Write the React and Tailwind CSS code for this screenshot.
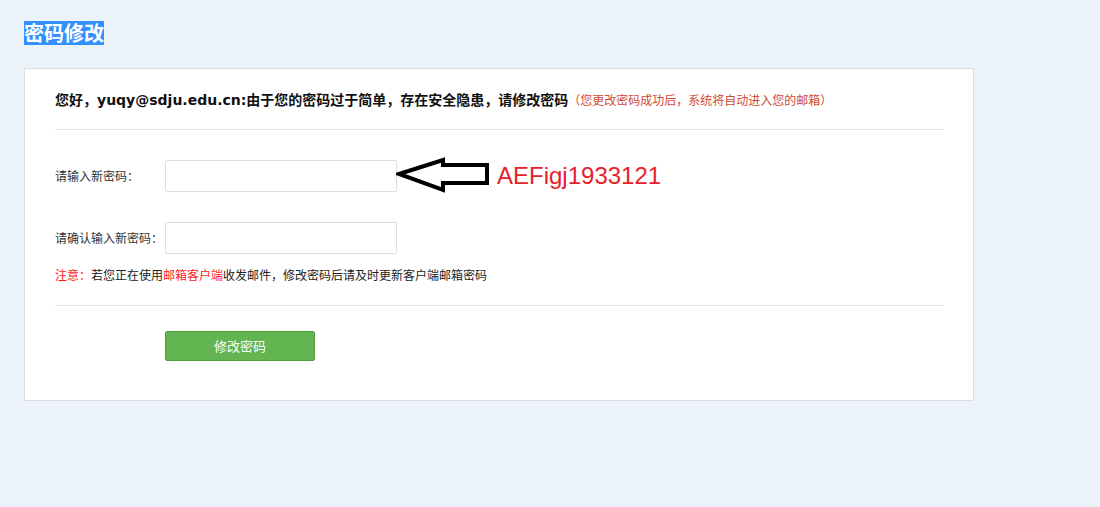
const cjk = 'font-["DejaVu_Sans","Noto_Sans_CJK_SC",sans-serif]'

const Field = ({ label, children }) => (
  <div className="flex h-[32px] items-center">
    <label className="w-[110px] text-[12px] leading-[20px] text-[#333]">{label}</label>
    <input
      type="password"
      className="h-[32px] w-[232px] rounded-[2px] border border-[#dedede] bg-white px-2 text-[12px] outline-none"
    />
    {children}
  </div>
)

export default function App() {
  return (
    <div className={`min-h-[507px] w-full bg-[#ebf2fa] pl-[24px] pt-[21px] ${cjk}`}>
      <h1 className="block h-[24px] w-fit bg-[#3390ff] text-[20px] font-bold leading-[24px] text-white font-['Noto_Sans_CJK_SC',sans-serif]">
        密码修改
      </h1>

      <div className="mt-[23px] w-[950px] border border-[#dcdcdc] bg-white px-[30px] pb-[39px] pt-[21px]">
        <p className="mb-[19px] leading-[20px] whitespace-nowrap">
          <span className="text-[14px] font-bold text-[#111]">
            您好，yuqy@sdju.edu.cn:由于您的密码过于简单，存在安全隐患，请修改密码
          </span>
          <span className="text-[12px] text-[#cf4a33] font-['Noto_Sans_CJK_SC',sans-serif]">
            （您更改密码成功后，系统将自动进入您的邮箱）
          </span>
        </p>
        <div className="h-px bg-[#e3e3e3]" />

        <div className="mt-[30px] flex flex-col gap-[30px] font-['Noto_Sans_CJK_SC',sans-serif]">
          <Field label="请输入新密码：">
            <svg width="96" height="38" viewBox="0 0 96 38" className="-ml-[1px] shrink-0">
              <polygon
                points="3,17 47,3 47,8 91,8 91,26 47,26 47,33"
                fill="none"
                stroke="#000"
                strokeWidth="4"
                strokeLinejoin="miter"
              />
            </svg>
            <span className="ml-[5px] text-[24px] leading-[30px] text-[#e8202a] font-['Liberation_Sans',sans-serif]">
              AEFigj1933121
            </span>
          </Field>
          <Field label="请确认输入新密码：" />
        </div>

        <p className="mt-[11px] text-[12px] leading-[20px] text-[#222] font-['Noto_Sans_CJK_SC',sans-serif]">
          <span className="text-[#ff1a1a]">注意：</span>
          若您正在使用<span className="text-[#ff1a1a]">邮箱客户端</span>收发邮件，修改密码后请及时更新客户端邮箱密码
        </p>

        <div className="mt-[20px] h-px bg-[#e3e3e3]" />

        <div className="mt-[25px] pl-[110px]">
          <button className="h-[30px] w-[150px] rounded-[2px] border border-[#4f9f3d] bg-[#62b550] text-[13px] text-white font-['Noto_Sans_CJK_SC',sans-serif]">
            修改密码
          </button>
        </div>
      </div>
    </div>
  )
}
